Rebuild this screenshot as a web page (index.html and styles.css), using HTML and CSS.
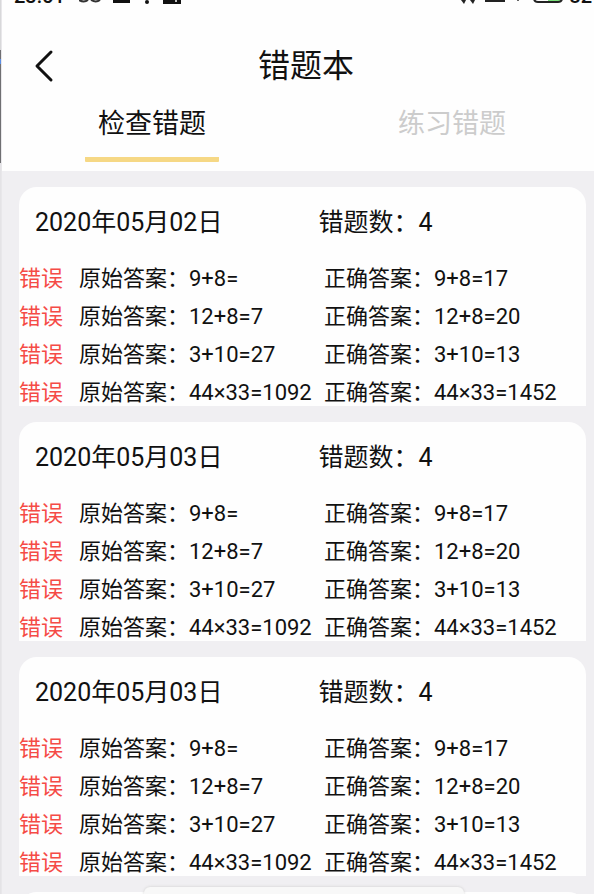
FILE: index.html
```html
<!DOCTYPE html>
<html lang="zh-CN">
<head>
<meta charset="utf-8">
<meta name="viewport" content="width=device-width, initial-scale=1">
<title>错题本</title>
<link rel="stylesheet" href="styles.css">
</head>
<body>
<div class="app">
  <header class="top">
    <div class="status">
      <span class="status-text">23:51</span>
      <svg class="status-left" width="104" height="6" viewBox="0 0 104 6" aria-hidden="true">
        <path d="M0 0q5 3 9 0M12 0q5 3 9 0" fill="none" stroke="#333" stroke-width="2"/>
        <path d="M34 0h17v3H34zM84 0h18v4H84z" fill="#111"/>
        <circle cx="68" cy="2" r="2" fill="#111"/>
        <circle cx="97" cy="1" r="1" fill="#fff"/>
      </svg>
      <svg class="status-right" width="104" height="6" viewBox="0 0 104 6" aria-hidden="true">
        <path d="M0 0h5L3 4zM9 0h5l-2 4z" fill="#222"/>
        <path d="M25 -4h18v5H25z" fill="#777" stroke="#222" stroke-width="2"/>
        <path d="M56 0h2v1h-2z" fill="#666"/>
        <path d="M87 0h13q-1 2-4 2h-9z" fill="#7be07b"/>
        <path d="M73 -2q0 4 4 4h20q4 0 4-4" fill="none" stroke="#222" stroke-width="2"/>
      </svg>
      <span class="status-text">82</span>
    </div>
    <div class="bar">
      <button class="back" type="button" aria-label="返回">
        <svg width="20" height="34" viewBox="0 0 20 34" aria-hidden="true"><path d="M17 3 3 17l14 14" fill="none" stroke="#111" stroke-width="3" stroke-linecap="round" stroke-linejoin="round"/></svg>
      </button>
      <h1>错题本</h1>
    </div>
    <nav class="tabs">
      <a class="tab active" href="#check">检查错题</a>
      <a class="tab" href="#practice">练习错题</a>
    </nav>
  </header>
  <main class="list" id="check">
    <section class="card">
      <div class="card-head"><h2>2020年05月02日</h2><p>错题数：4</p></div>
      <table>
        <tr><td class="wrong">错误</td><td class="given">原始答案：9+8=</td><td>正确答案：9+8=17</td></tr>
        <tr><td class="wrong">错误</td><td class="given">原始答案：12+8=7</td><td>正确答案：12+8=20</td></tr>
        <tr><td class="wrong">错误</td><td class="given">原始答案：3+10=27</td><td>正确答案：3+10=13</td></tr>
        <tr><td class="wrong">错误</td><td class="given">原始答案：44×33=1092</td><td>正确答案：44×33=1452</td></tr>
      </table>
    </section>
    <section class="card">
      <div class="card-head"><h2>2020年05月03日</h2><p>错题数：4</p></div>
      <table>
        <tr><td class="wrong">错误</td><td class="given">原始答案：9+8=</td><td>正确答案：9+8=17</td></tr>
        <tr><td class="wrong">错误</td><td class="given">原始答案：12+8=7</td><td>正确答案：12+8=20</td></tr>
        <tr><td class="wrong">错误</td><td class="given">原始答案：3+10=27</td><td>正确答案：3+10=13</td></tr>
        <tr><td class="wrong">错误</td><td class="given">原始答案：44×33=1092</td><td>正确答案：44×33=1452</td></tr>
      </table>
    </section>
    <section class="card">
      <div class="card-head"><h2>2020年05月03日</h2><p>错题数：4</p></div>
      <table>
        <tr><td class="wrong">错误</td><td class="given">原始答案：9+8=</td><td>正确答案：9+8=17</td></tr>
        <tr><td class="wrong">错误</td><td class="given">原始答案：12+8=7</td><td>正确答案：12+8=20</td></tr>
        <tr><td class="wrong">错误</td><td class="given">原始答案：3+10=27</td><td>正确答案：3+10=13</td></tr>
        <tr><td class="wrong">错误</td><td class="given">原始答案：44×33=1092</td><td>正确答案：44×33=1452</td></tr>
      </table>
    </section>
    <section class="card upcoming"></section>
  </main>
  <div class="sheet"></div>
</div>
</body>
</html>
```
FILE: styles.css
```css
* {
  box-sizing: border-box;
}

body {
  margin: 0;
  background: linear-gradient(#d8d8da 0 50px, #6f6f72 50px 59px, #5a8ee6 59px 64px, #6f6f72 64px 163px, #e4e3e6 163px) left top / 1px 100% no-repeat #e8e7ea;
  color: #111;
  font-family: Roboto, "Noto Sans CJK SC", sans-serif;
}

h1, h2, p {
  margin: 0;
  font-weight: 400;
}

.app {
  position: relative;
  height: 100vh;
  margin-left: 2px;
  overflow: hidden;
  background: #f0eff2;
}

.top {
  background: #fefefe;
}

.status {
  display: flex;
  align-items: flex-start;
  height: 6px;
  padding: 0 2px 0 12px;
  overflow: hidden;
}

.status-text {
  align-self: flex-end;
  font-size: 20px;
  font-weight: 500;
  line-height: 20px;
}

.status-left {
  margin-left: 14px;
}

.status-right {
  margin-left: auto;
  margin-right: 4px;
}

.bar {
  display: grid;
  grid-template-columns: 80px 1fr 80px;
  align-items: center;
  height: 94px;
  padding-top: 26px;
}

.back {
  display: flex;
  justify-content: flex-start;
  padding: 0 0 0 32px;
  border: 0;
  background: none;
}

h1 {
  padding-left: 16px;
  font-size: 32px;
  line-height: 40px;
  text-align: center;
}

.tabs {
  display: grid;
  grid-template-columns: 1fr 1fr;
  justify-items: center;
  margin-right: -8px;
  padding-bottom: 9px;
}

.tab {
  width: 134px;
  height: 62px;
  border-bottom: 5px solid transparent;
  border-radius: 1px;
  color: #ccc;
  font-size: 27px;
  line-height: 48px;
  text-align: center;
  text-decoration: none;
}

.tab.active {
  border-color: #f6d885;
  color: #111;
}

.list {
  display: grid;
  gap: 16px;
  padding: 16px 8px 0 17px;
}

.card {
  border-radius: 18px 18px 0 0;
  background: #fefefe;
}

.upcoming {
  min-height: 219px;
}

.card-head {
  display: grid;
  grid-template-columns: 1fr 1fr;
  padding: 16px 0 13px 16px;
}

.card-head h2,
.card-head p {
  font-size: 25px;
  line-height: 40px;
}

.card-head p {
  padding-left: 8px;
}

table {
  width: 100%;
  border-collapse: collapse;
  table-layout: fixed;
}

td {
  padding: 12px 0 0;
  font-size: 22px;
  line-height: 26px;
  white-space: nowrap;
}

tr:first-child td {
  padding-top: 10px;
}

.wrong {
  width: 60px;
  color: #f54b46;
}

.given {
  width: 245px;
}

.sheet {
  position: absolute;
  bottom: 0;
  left: 24%;
  width: 54%;
  height: 7px;
  border-radius: 6px 6px 0 0;
  background: #f8f8f8;
  box-shadow: 0 0 3px #ccc;
}
```
